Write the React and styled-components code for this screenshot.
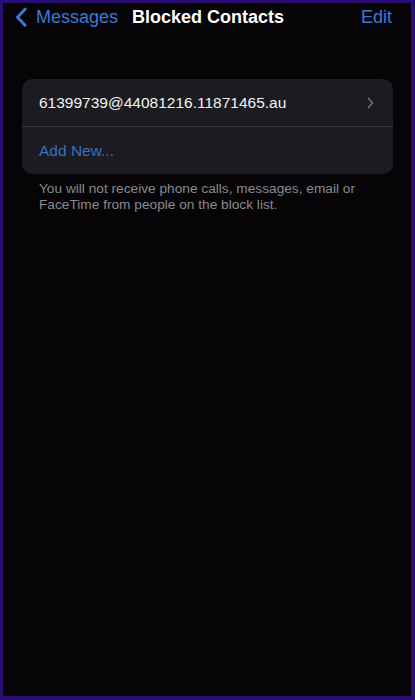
import React from "react";
import styled, { createGlobalStyle } from "styled-components";

const Global = createGlobalStyle`
  html, body {
    margin: 0;
    padding: 0;
    background: #2a0d70;
  }
  body {
    font-family: "Liberation Sans", Arial, sans-serif;
  }
`;

const Frame = styled.div`
  box-sizing: border-box;
  width: 415px;
  height: 700px;
  border-style: solid;
  border-color: #2a0d70;
  border-width: 3px 4px 4px 3px;
  background: #060407;
  display: flex;
  flex-direction: column;
`;

const NavBar = styled.div`
  display: flex;
  align-items: center;
  height: 28px;
  padding: 0 19px 0 12px;
  font-size: 18px;
`;

const Back = styled.div`
  display: flex;
  align-items: center;
  gap: 9px;
  color: #3b78d4;
  margin-right: 14px;
  svg {
    display: block;
  }
`;

const Title = styled.div`
  color: #fff;
  font-weight: 700;
  flex: 1;
`;

const Edit = styled.div`
  color: #3b78d4;
`;

const Card = styled.div`
  margin: 48px 18px 0 19px;
  background: #1c1b20;
  border-radius: 10px;
  overflow: hidden;
`;

const Row = styled.div`
  display: flex;
  align-items: center;
  height: 47px;
  padding: 0 19px 0 17px;
  font-size: 15.5px;
  color: ${(p) => (p.$accent ? "#3670c8" : "#f2f2f4")};
  border-bottom: ${(p) => (p.$divider ? "1px solid #38373c" : "none")};
`;

const Label = styled.span`
  flex: 1;
`;

const Footer = styled.p`
  margin: 7px 18px 0 36px;
  font-size: 13.7px;
  line-height: 16px;
  color: #8a898f;
`;

function Chevron({ size = 12, color, width = 3 }) {
  return (
    <svg width={size} height={size * 1.7} viewBox="0 0 12 20" fill="none">
      <path
        d="M10 2 L2.5 10 L10 18"
        stroke={color}
        strokeWidth={width}
        strokeLinecap="round"
        strokeLinejoin="round"
      />
    </svg>
  );
}

function Disclosure() {
  return (
    <svg width="7" height="12" viewBox="0 0 7 12" fill="none">
      <path
        d="M1.5 1.5 L5.5 6 L1.5 10.5"
        stroke="#6b6a70"
        strokeWidth="1.8"
        strokeLinecap="round"
        strokeLinejoin="round"
      />
    </svg>
  );
}

export default function App() {
  return (
    <>
      <Global />
      <Frame>
        <NavBar>
          <Back>
            <Chevron color="#3b78d4" />
            <span>Messages</span>
          </Back>
          <Title>Blocked Contacts</Title>
          <Edit>Edit</Edit>
        </NavBar>
        <Card>
          <Row $divider>
            <Label>61399739@44081216.11871465.au</Label>
            <Disclosure />
          </Row>
          <Row $accent>
            <Label>Add New...</Label>
          </Row>
        </Card>
        <Footer>
          You will not receive phone calls, messages, email or FaceTime from
          people on the block list.
        </Footer>
      </Frame>
    </>
  );
}
